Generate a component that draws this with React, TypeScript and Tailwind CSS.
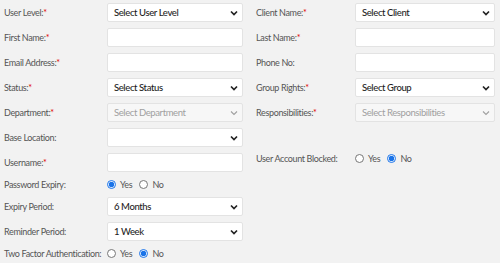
import React from 'react';

const font = { fontFamily: 'Lato, "Open Sans", Arial, sans-serif' };

function Label({ text, required }: { text: string; required?: boolean }) {
  return (
    <span className="whitespace-nowrap">
      {text}
      {required && <span className="text-[#e00000]">*</span>}
    </span>
  );
}

function Chevron({ faded }: { faded?: boolean }) {
  return (
    <svg
      width="8"
      height="6"
      viewBox="0 0 8 6"
      className="absolute right-[5px] top-1/2 -translate-y-1/2 pointer-events-none"
    >
      <path
        d="M1 1.5 L4 4.5 L7 1.5"
        fill="none"
        stroke={faded ? '#a0a0a0' : '#222'}
        strokeWidth={faded ? 1.1 : 1.7}
      />
    </svg>
  );
}

function Select({ value, disabled, w }: { value: string; disabled?: boolean; w: string }) {
  return (
    <div className={`relative h-[19px] ${w}`}>
      <div
        className={`h-full w-full rounded-[2px] border border-[#e3e3e3] flex items-center pl-[6px] text-[9.5px] leading-none tracking-[-0.4px] ${
          disabled ? 'bg-[#f7f7f7] text-[#a0a0a0]' : 'bg-white text-[#1e1e1e] font-medium'
        }`}
      >
        {value}
      </div>
      <Chevron faded={disabled} />
    </div>
  );
}

function TextBox({ w }: { w: string }) {
  return <div className={`h-[19px] ${w} rounded-[2px] border border-[#e3e3e3] bg-white`} />;
}

function Radios({ name, checked }: { name: string; checked: 'yes' | 'no' }) {
  return (
    <div className="flex items-center text-[9px] leading-none tracking-[-0.3px] text-[#555]">
      <input
        type="radio"
        name={name}
        defaultChecked={checked === 'yes'}
        className="m-0 w-[9px] h-[9px] accent-[#1a73e8]"
      />
      <span className="ml-[4px] mr-[7px]">Yes</span>
      <input
        type="radio"
        name={name}
        defaultChecked={checked === 'no'}
        className="m-0 w-[9px] h-[9px] accent-[#1a73e8]"
      />
      <span className="ml-[4px]">No</span>
    </div>
  );
}

function Row({ label, required, children, lw, h = 'h-[19px]' }: {
  label: string;
  required?: boolean;
  children?: React.ReactNode;
  lw: string;
  h?: string;
}) {
  return (
    <div className={`flex items-center ${h}`}>
      <div className={`${lw} text-[9px] leading-none tracking-[-0.35px] text-[#555]`}>
        <Label text={label} required={required} />
      </div>
      {children}
    </div>
  );
}

export default function App() {
  const L = 'w-[103px] shrink-0';
  const R = 'w-[99px] shrink-0';
  return (
    <div className="w-[500px] h-[263px] bg-[#f2f2f2] overflow-hidden flex pt-[3px]" style={font}>
      {/* left column */}
      <div className="w-[243px] pl-[4px] flex flex-col gap-[6px]">
        <Row label="User Level:" required lw={L}>
          <Select value="Select User Level" w="w-[136px]" />
        </Row>
        <Row label="First Name:" required lw={L}>
          <TextBox w="w-[136px]" />
        </Row>
        <Row label="Email Address:" required lw={L}>
          <TextBox w="w-[136px]" />
        </Row>
        <Row label="Status:" required lw={L}>
          <Select value="Select Status" w="w-[136px]" />
        </Row>
        <Row label="Department:" required lw={L}>
          <Select value="Select Department" disabled w="w-[136px]" />
        </Row>
        <Row label="Base Location:" lw={L}>
          <Select value="" w="w-[136px]" />
        </Row>
        <Row label="Username:" required lw={L}>
          <TextBox w="w-[136px]" />
        </Row>
        <Row label="Password Expiry:" lw={L} h="h-[13px]">
          <Radios name="pe" checked="yes" />
        </Row>
        <Row label="Expiry Period:" lw={L}>
          <Select value="6 Months" w="w-[136px]" />
        </Row>
        <Row label="Reminder Period:" lw={L}>
          <Select value="1 Week" w="w-[136px]" />
        </Row>
        <Row label="Two Factor Authentication:" lw={L} h="h-[13px]">
          <Radios name="tfa" checked="no" />
        </Row>
      </div>

      {/* right column */}
      <div className="ml-[13px] w-[239px] flex flex-col gap-[6px]">
        <Row label="Client Name:" required lw={R}>
          <Select value="Select Client" w="w-[140px]" />
        </Row>
        <Row label="Last Name:" required lw={R}>
          <TextBox w="w-[140px]" />
        </Row>
        <Row label="Phone No:" lw={R}>
          <TextBox w="w-[140px]" />
        </Row>
        <Row label="Group Rights:" required lw={R}>
          <Select value="Select Group" w="w-[140px]" />
        </Row>
        <Row label="Responsibilities:" required lw={R}>
          <Select value="Select Responsibilities" disabled w="w-[140px]" />
        </Row>
        <div className="h-[18px]" />
        <Row label="User Account Blocked:" lw={R} h="h-[13px]">
          <Radios name="uab" checked="no" />
        </Row>
      </div>
    </div>
  );
}
